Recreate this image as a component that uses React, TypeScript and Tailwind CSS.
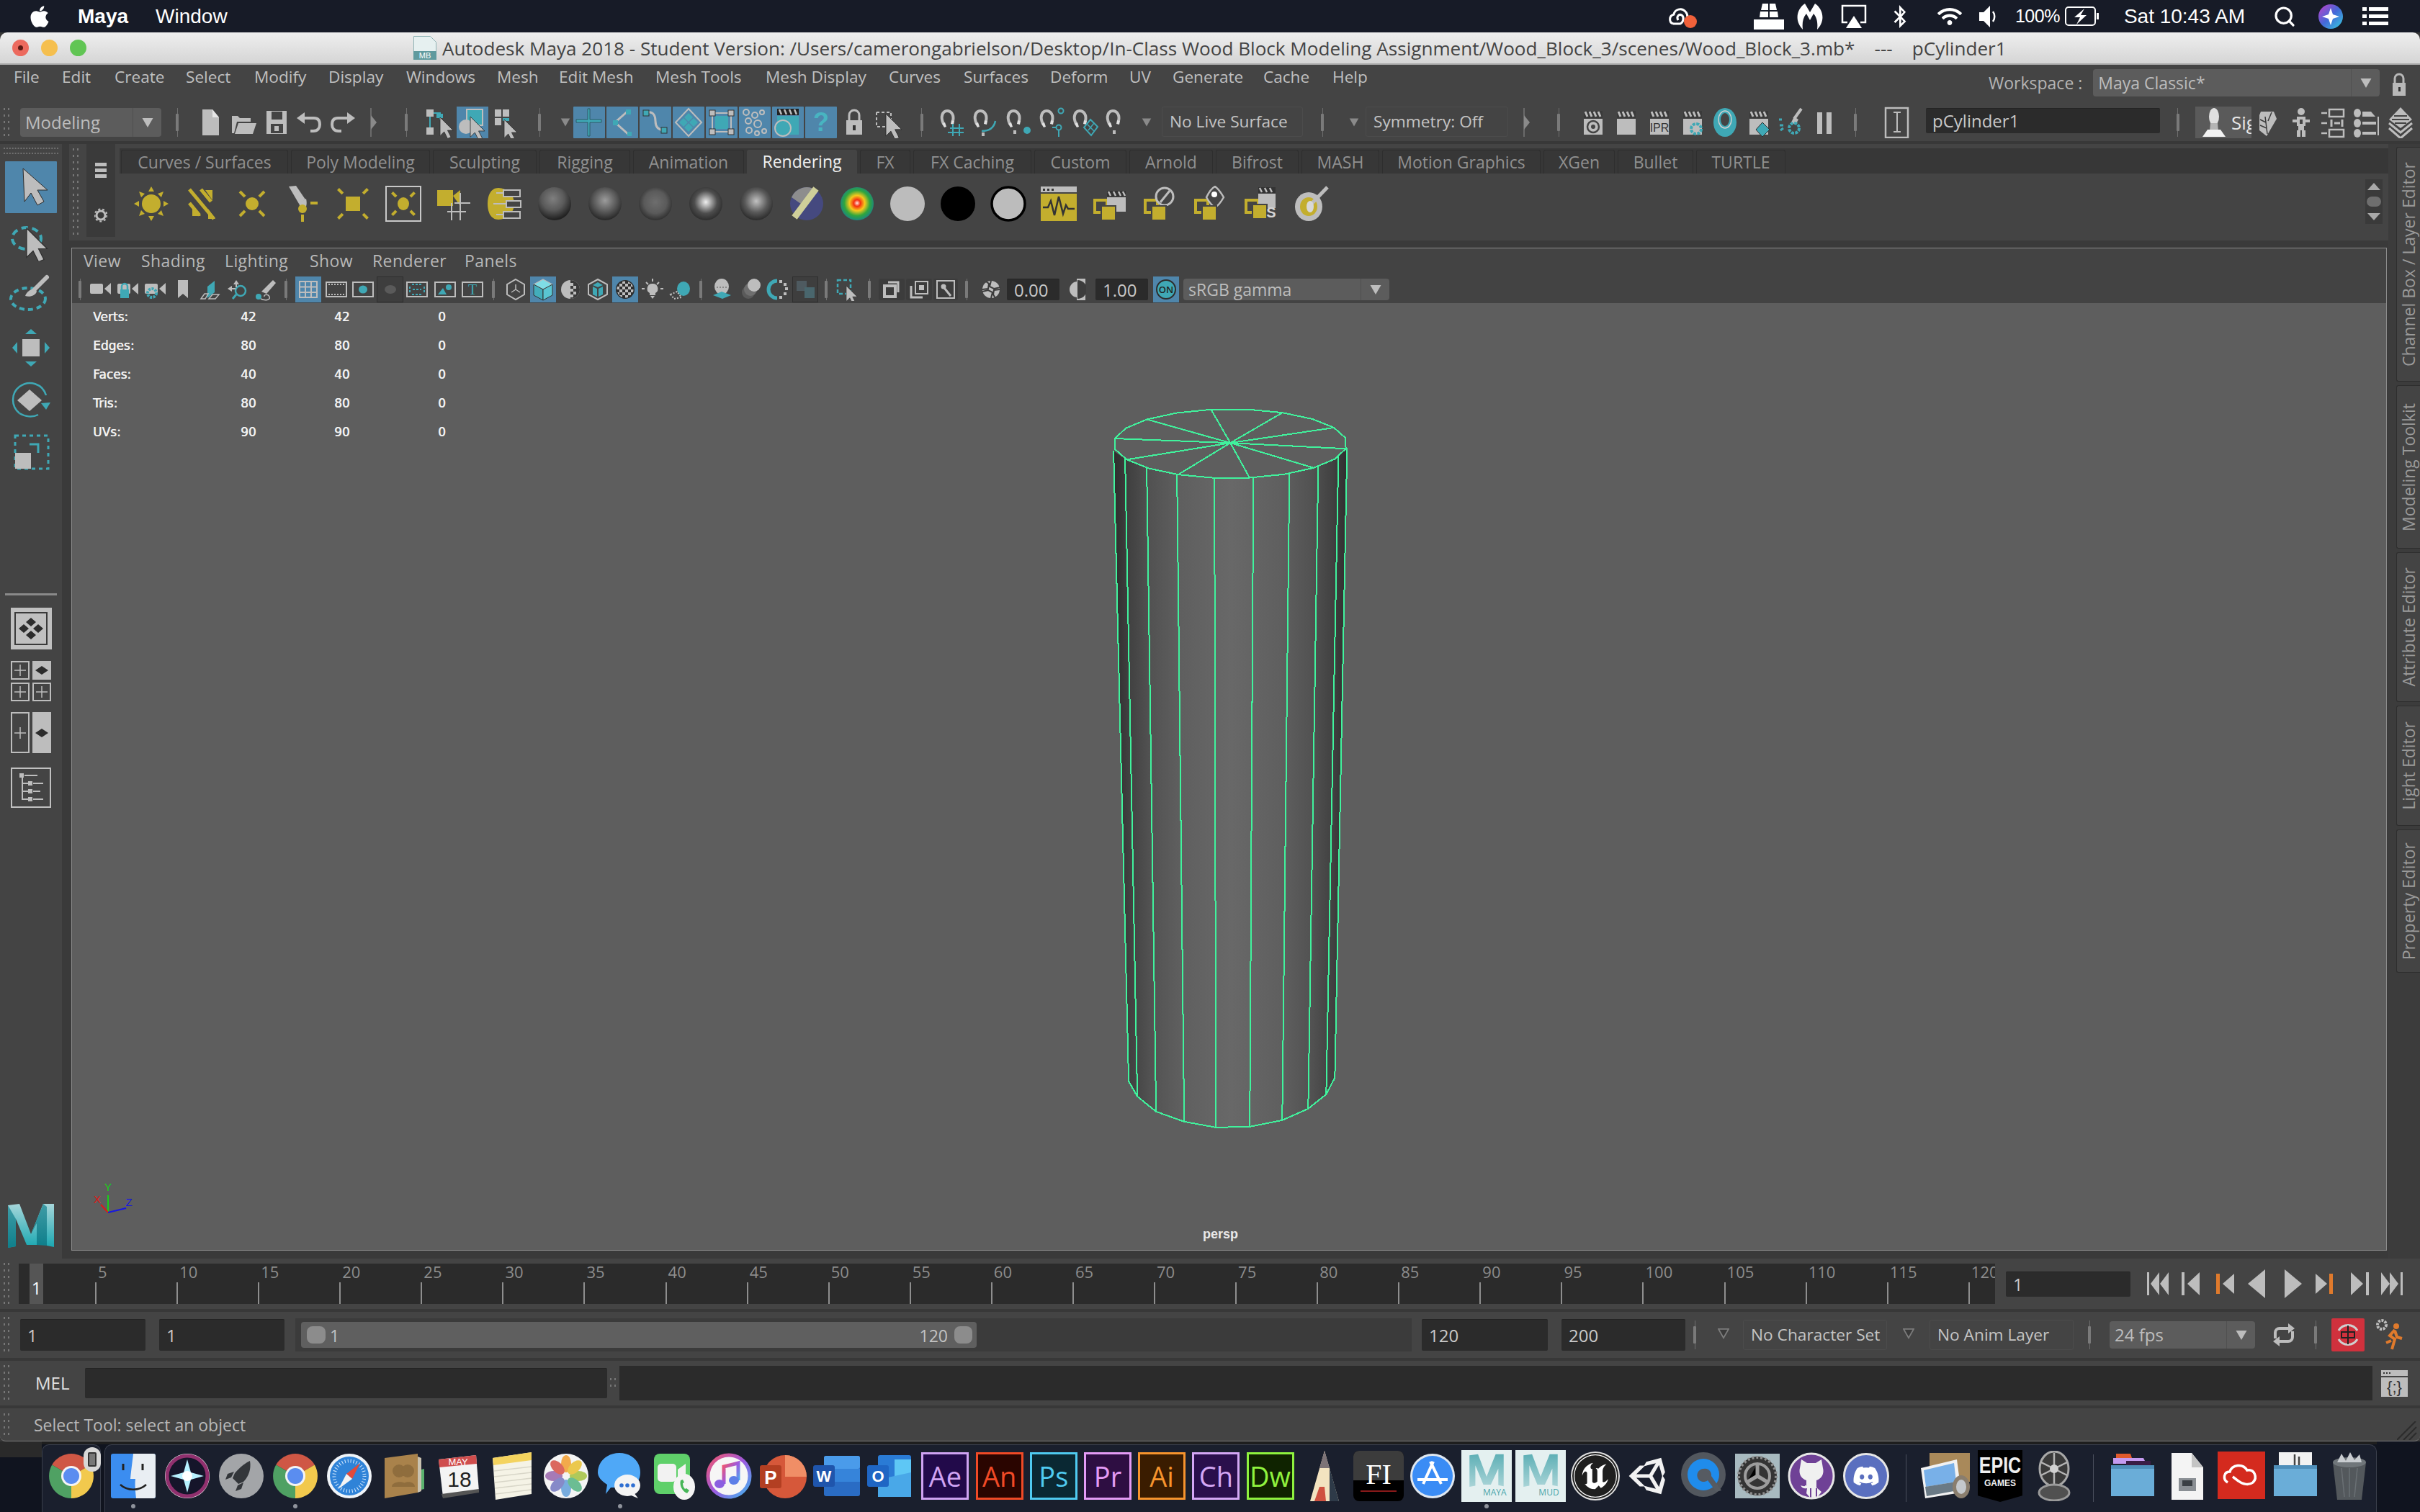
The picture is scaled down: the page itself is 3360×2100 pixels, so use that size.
import type { ReactNode } from "react";
import { FaApple, FaBluetoothB, FaWifi, FaDiscord, FaUnity } from "react-icons/fa";
import { SiUnrealengine } from "react-icons/si";
import { Search } from "lucide-react";

const G = "#bdbdbd";
const T = "#3fa8b5";
const Y = "#c3ae2e";
const D = "#333333";

type Kids = { children?: ReactNode; className?: string };

// svg wrapper, all toolbar icons are drawn on their own small grid
const Ic = ({ s = 44, children }: { s?: number; children?: ReactNode }) => (
  <svg width={s} height={s} viewBox={`0 0 ${s} ${s}`} className="shrink-0">
    {children}
  </svg>
);

const Slot = ({ className = "", children }: Kids) => (
  <div className={`flex h-full shrink-0 items-center justify-center ${className}`}>{children}</div>
);

const Arrow = ({ x, y, k = 1, fill = G }: { x: number; y: number; k?: number; fill?: string }) => (
  <path transform={`translate(${x} ${y}) scale(${k})`} d="M0 0v27l6-6 5 10 5-2-5-10h8z" fill={fill} stroke="#2e2e2e" strokeWidth="0.8" />
);

const Grip = ({ rows = 8, className = "" }: { rows?: number; className?: string }) => (
  <svg width="10" height={rows * 9} className={`shrink-0 ${className}`}>
    {Array.from({ length: rows }).map((_, i) => (
      <g key={i} fill="#777777">
        <rect x="1" y={i * 9 + 2} width="2" height="3" />
        <rect x="7" y={i * 9 + 2} width="2" height="3" />
      </g>
    ))}
  </svg>
);

const Sep = ({ className = "", h = "h-[40px]" }: { className?: string; h?: string }) => (
  <Slot className={className}>
    <div className={`relative flex w-[1px] items-center justify-center bg-[#6e6e6e] ${h}`}>
      <div className="h-[24px] w-[4px] shrink-0 rounded-[1px] bg-[#7a7a7a]" />
    </div>
  </Slot>
);

const Tri = ({ fill = G, w = 18, h = 16, stroke = "none" }: { fill?: string; w?: number; h?: number; stroke?: string }) => (
  <svg width={w} height={h} viewBox="0 0 18 16" className="shrink-0">
    <path d="M1 1h16l-8 14z" fill={fill} stroke={stroke} strokeWidth="2" />
  </svg>
);

const Handle = ({ className = "" }: Kids) => (
  <Slot className={className}>
    <svg width="10" height="40" viewBox="0 0 10 40">
      <path d="M1 0v40" stroke="#777" strokeWidth="1.5" />
      <path d="M1 10l8 10-8 10z" fill="#8a8a8a" />
    </svg>
  </Slot>
);

const Combo = ({ children, className = "", text = "text-[24px]" }: Kids & { text?: string }) => (
  <div className={`flex shrink-0 items-center rounded-[4px] bg-[#5c5c5c] pl-[7px] text-[#bdbdbd] ${text} ${className}`}>
    <span className="flex-1 whitespace-nowrap">{children}</span>
    <div className="flex h-full w-[40px] items-center justify-center border-l border-[#505050]">
      <Tri w={18} h={15} />
    </div>
  </div>
);

const LineBox = ({ children, className = "" }: Kids) => (
  <div className={`flex h-[42px] shrink-0 items-center rounded-[3px] border border-[#4c4c4c] pl-[10px] text-[22.7px] text-[#c4c4c4] ${className}`}>
    <span className="whitespace-nowrap">{children}</span>
  </div>
);

const Field = ({ children, className = "" }: Kids) => (
  <div className={`flex shrink-0 items-center rounded-[2px] border-t border-[#232323] bg-[#2b2b2b] pl-[10px] text-[24px] text-[#c8c8c8] ${className}`}>
    {children}
  </div>
);

/* ---------- macOS menu bar ---------- */

const MenuBar = () => (
  <div className="flex h-[45px] shrink-0 items-center bg-[#171b27] font-['Liberation_Sans',sans-serif] text-[28px] text-white">
    <FaApple size={34} className="ml-[38px] shrink-0" />
    <span className="ml-[36px] font-bold">Maya</span>
    <span className="ml-[38px]">Window</span>
    <div className="ml-auto flex items-center">
      <svg width="46" height="36" viewBox="0 0 46 36" className="mr-[74px]">
        <path d="M8 28c-6-2-6-11 1-13 1-7 11-10 16-4 2 2 3 6 3 8" fill="none" stroke="#fff" strokeWidth="3" />
        <path d="M8 28h10c4-2 6-9 2-12-4-2-8 2-5 7" fill="none" stroke="#fff" strokeWidth="3" />
        <circle cx="32" cy="25" r="9" fill="#f1613a" />
      </svg>
      <svg width="42" height="38" viewBox="0 0 42 38" className="mr-[17px]" fill="#fff">
        <path d="M12 2h8v9H10zM22 2h8l2 9H22zM9 13h11v8H8zM22 13h11l1 8H22zM0 24h42v14H0z" transform="translate(0 -1)" />
      </svg>
      <svg width="38" height="38" viewBox="0 0 38 38" className="mr-[24px]" fill="#fff">
        <path d="M4 30C-2 18 4 6 12 1l7 12 7-12c8 5 14 17 8 29-1 2-3 5-5 7 1-9 0-16-5-22l-5 9-5-9c-5 6-6 13-5 22-2-2-4-5-5-7z" />
      </svg>
      <svg width="36" height="34" viewBox="0 0 36 34" className="mr-[30px]">
        <path d="M9 25H2V2h32v23h-7" fill="none" stroke="#fff" strokeWidth="2.5" />
        <path d="M18 16l11 17H7z" fill="#fff" />
      </svg>
      <FaBluetoothB size={32} className="mr-[36px] shrink-0" />
      <FaWifi size={34} className="mr-[24px] shrink-0" />
      <svg width="26" height="32" viewBox="0 0 26 32" className="mr-[24px]" fill="#fff">
        <path d="M0 10h6l9-9v30l-9-9H0z" />
        <path d="M19 9c3 4 3 10 0 14" stroke="#fff" strokeWidth="2.5" fill="none" />
      </svg>
      <span className="mr-[7px] text-[25px] tracking-[-0.5px]">100%</span>
      <svg width="48" height="28" viewBox="0 0 48 28" className="mr-[34px]">
        <rect x="1" y="1" width="41" height="25" rx="4" fill="none" stroke="#fff" strokeWidth="2" />
        <rect x="44" y="9" width="3" height="9" fill="#fff" />
        <path d="M27 3L13 15h8l-5 10 14-13h-8z" fill="#fff" />
      </svg>
      <span className="mr-[39px] whitespace-nowrap">Sat 10:43 AM</span>
      <Search size={32} strokeWidth={2.4} className="mr-[31px] shrink-0" />
      <svg width="34" height="34" viewBox="0 0 34 34" className="mr-[27px]">
        <defs>
          <linearGradient id="siriBar" x1="0" y1="0" x2="1" y2="1">
            <stop offset="0" stopColor="#c43ec9" />
            <stop offset="0.5" stopColor="#4469d8" />
            <stop offset="1" stopColor="#37d0e0" />
          </linearGradient>
        </defs>
        <circle cx="17" cy="17" r="17" fill="url(#siriBar)" />
        <path d="M17 5l3 9 9 3-9 3-3 9-3-9-9-3 9-3z" fill="#fff" />
      </svg>
      <svg width="36" height="26" viewBox="0 0 36 26" className="mr-[44px]" fill="#fff">
        <rect y="0" width="6" height="5" /><rect x="9" y="0" width="27" height="5" />
        <rect y="10" width="6" height="5" /><rect x="9" y="10" width="27" height="5" />
        <rect y="20" width="6" height="5" /><rect x="9" y="20" width="27" height="5" />
      </svg>
    </div>
  </div>
);

/* ---------- window chrome ---------- */

const TitleBar = () => (
  <div className="flex h-[45px] shrink-0 items-center rounded-t-[10px] border-b-2 border-[#a9a9a9] bg-gradient-to-b from-[#efefef] to-[#d5d5d5]">
    <div className="relative ml-[17px] h-[23px] w-[23px] shrink-0 rounded-full bg-[#ec6a5e]">
      <div className="absolute left-[8px] top-[8px] h-[7px] w-[7px] rounded-full bg-[#5c1a14]" />
    </div>
    <div className="ml-[17px] h-[23px] w-[23px] shrink-0 rounded-full bg-[#f5bf4f]" />
    <div className="ml-[17px] h-[23px] w-[23px] shrink-0 rounded-full bg-[#61c554]" />
    <svg width="32" height="33" viewBox="0 0 32 33" className="ml-[454px] shrink-0">
      <path d="M0.5 0.5h23l8 8v13H0.5z" fill="#e6f0f0" stroke="#8fb3b5" />
      <rect y="21" width="32" height="12" fill="#5f9a9e" />
      <text x="16" y="31" fontSize="11" fill="#fff" textAnchor="middle" fontFamily="Liberation Sans">MB</text>
    </svg>
    <span className="ml-[8px] mt-[3px] whitespace-pre text-[26.1px] text-[#444444]">
      Autodesk Maya 2018 - Student Version: /Users/camerongabrielson/Desktop/In-Class Wood Block Modeling Assignment/Wood_Block_3/scenes/Wood_Block_3.mb*    ---    pCylinder1
    </span>
  </div>
);

const MENUS = [
  ["File", "w-[67px]"],
  ["Edit", "w-[73px]"],
  ["Create", "w-[99px]"],
  ["Select", "w-[95px]"],
  ["Modify", "w-[103px]"],
  ["Display", "w-[108px]"],
  ["Windows", "w-[126px]"],
  ["Mesh", "w-[86px]"],
  ["Edit Mesh", "w-[134px]"],
  ["Mesh Tools", "w-[153px]"],
  ["Mesh Display", "w-[171px]"],
  ["Curves", "w-[104px]"],
  ["Surfaces", "w-[120px]"],
  ["Deform", "w-[110px]"],
  ["UV", "w-[60px]"],
  ["Generate", "w-[126px]"],
  ["Cache", "w-[96px]"],
  ["Help", "w-[60px]"],
];

const MainMenu = () => (
  <div className="flex h-[58px] shrink-0 bg-[#444444] pl-[19px] text-[22.6px] text-[#c0c0c0]">
    {MENUS.map(([m, w]) => (
      <span key={m} className={`h-[34px] shrink-0 whitespace-nowrap ${w}`}>
        {m}
      </span>
    ))}
    <span className="ml-[851px] mt-[8px] h-[34px] shrink-0 whitespace-nowrap text-[23px] text-[#b4b4b4]">Workspace :</span>
    <Combo className="ml-[15px] mt-[6px] h-[38px] w-[398px]" text="text-[23px]">Maya Classic*</Combo>
    <svg width="24" height="34" viewBox="0 0 24 34" className="ml-[15px] mt-[11px] shrink-0">
      <path d="M6 14V8a6 6 0 0 1 12 0v6" fill="none" stroke="#b8b8b8" strokeWidth="3" />
      <rect x="3" y="14" width="18" height="18" fill="#b8b8b8" />
      <rect x="11" y="20" width="3" height="6" fill="#333" />
    </svg>
  </div>
);

const BlueBtn = ({ children }: Kids) => (
  <div className="mr-[2px] flex h-[44px] w-[44px] shrink-0 items-center justify-center rounded-[1px] bg-[#4f86ab]">{children}</div>
);

const Clapper = ({ children }: Kids) => (
  <Ic>
    <rect x="10" y="6" width="26" height="10" fill="#3a3a3a" />
    <path d="M12 7l3 7M18 7l3 7M24 7l3 7M30 7l3 7" stroke={G} strokeWidth="3" />
    <rect x="10" y="17" width="26" height="22" fill={G} />
    {children}
  </Ic>
);

const Magnet = ({ children }: Kids) => (
  <Ic>
    <path d="M8 24C3 14 7 6 13 6s10 6 8 14" fill="none" stroke={G} strokeWidth="4" />
    <path d="M6 24l4-2 2 6-3 1zM19 19l4 1-1 5-4-1z" fill="#e0e0e0" />
    {children}
  </Ic>
);

const ToolRow = () => (
  <div className="flex h-[48px] shrink-0 items-start bg-[#444444] text-[24px] text-[#c4c4c4]">
    <div className="flex h-[44px] shrink-0 items-start">
      <Grip rows={5} className="ml-[4px] mr-[14px]" />
      <Combo className="mt-[2px] h-[40px] w-[196px]">Modeling</Combo>
      <Sep className="w-[44px]" />
      <Slot className="w-[48px]">
        <Ic><path d="M11 4h14l9 11v25H11z" fill={G} /><path d="M25 4l9 11h-9z" fill="#e6e6e6" /></Ic>
      </Slot>
      <Slot className="w-[45px]">
        <Ic><path d="M5 13h8l3 3h15v5H12L8 37H5z" fill={G} /><path d="M14 23h25l-5 15H9z" fill={G} /></Ic>
      </Slot>
      <Slot className="w-[46px]">
        <Ic>
          <path d="M8 6h28v32H8z" fill={G} />
          <rect x="15" y="7" width="15" height="11" fill="#444" />
          <rect x="14" y="24" width="17" height="13" fill="#444" />
          <rect x="19" y="27" width="6" height="7" fill={G} />
        </Ic>
      </Slot>
      <Slot className="w-[45px]">
        <Ic>
          <path d="M14 16h14c6 0 8 4 8 9s-3 9-9 9h-4" fill="none" stroke={G} strokeWidth="4" />
          <path d="M4 16l11-8v16z" fill={G} />
        </Ic>
      </Slot>
      <Slot className="w-[45px]">
        <Ic>
          <path d="M30 16H16c-6 0-8 4-8 9s3 9 9 9h4" fill="none" stroke={G} strokeWidth="4" />
          <path d="M40 16L29 8v16z" fill={G} />
        </Ic>
      </Slot>
      <Handle className="w-[44px]" />
      <Sep className="w-[46px]" />
      <Slot className="w-[47px]">
        <Ic>
          <rect x="3" y="4" width="10" height="10" fill={G} /><rect x="3" y="29" width="10" height="10" fill={G} />
          <path d="M13 9h9v9M8 14v15" stroke={T} strokeWidth="2" fill="none" />
          <rect x="17" y="10" width="9" height="6" fill={T} />
          <Arrow x={22} y={15} k={0.95} />
        </Ic>
      </Slot>
      <div className="flex h-[44px] w-[44px] shrink-0 items-center justify-center bg-[#4f86ab]">
        <Ic>
          <rect x="14" y="4" width="22" height="22" fill={T} stroke={G} strokeWidth="2" />
          <circle cx="13" cy="28" r="10" fill={G} />
          <Arrow x={19} y={14} k={1.05} />
        </Ic>
      </div>
      <Slot className="w-[46px]">
        <Ic>
          <path d="M8 4h9v10H8zM19 4h9v10h-9zM8 16h9v10H8z" fill={G} />
          <path d="M19 16h9v4H19z" fill={T} />
          <Arrow x={21} y={18} k={0.95} />
        </Ic>
      </Slot>
      <Sep className="w-[50px]" />
      <Slot className="w-[22px]"><Tri fill="#8a8a8a" w={14} h={14} /></Slot>
      <BlueBtn>
        <Ic><path d="M20 3h3v15h16v4H23v19h-3V22H4v-4h16z" fill={T} stroke="#264c57" strokeWidth="0.8" /></Ic>
      </BlueBtn>
      <BlueBtn>
        <Ic>
          <path d="M30 6L12 22l20 18" fill="none" stroke={G} strokeWidth="3" />
          <rect x="27" y="4" width="7" height="7" fill={T} /><rect x="9" y="19" width="7" height="7" fill={T} /><rect x="29" y="35" width="6" height="6" fill={T} />
        </Ic>
      </BlueBtn>
      <BlueBtn>
        <Ic>
          <path d="M10 8c10-2 12 6 12 12s2 12 11 13" fill="none" stroke={G} strokeWidth="3" />
          <rect x="5" y="5" width="8" height="8" fill={T} stroke={D} /><rect x="30" y="29" width="8" height="8" fill={T} stroke={D} />
        </Ic>
      </BlueBtn>
      <BlueBtn>
        <Ic>
          <path d="M22 3l18 19-18 19L4 22z" fill="none" stroke={G} strokeWidth="2" />
          <path d="M22 9l6 6-6 6-6-6zM22 23l6 6-6 6-6-6zM9 22l6-6 6 6-6 6zM35 22l-6-6-6 6 6 6z" fill={T} />
        </Ic>
      </BlueBtn>
      <BlueBtn>
        <Ic>
          <path d="M9 9h26v26H9z" fill="none" stroke={G} strokeWidth="2" />
          <path d="M13 13h18v18H13z" fill={T} />
          <g fill={G} stroke="#333"><rect x="5" y="5" width="8" height="8" /><rect x="31" y="5" width="8" height="8" /><rect x="5" y="31" width="8" height="8" /><rect x="31" y="31" width="8" height="8" /></g>
        </Ic>
      </BlueBtn>
      <BlueBtn>
        <Ic>
          <g fill="none" stroke={G} strokeWidth="2">
            <circle cx="10" cy="8" r="4" /><circle cx="22" cy="12" r="4" /><circle cx="32" cy="8" r="3" /><circle cx="13" cy="20" r="4" /><circle cx="26" cy="24" r="5" /><circle cx="35" cy="34" r="3" /><circle cx="14" cy="33" r="4" /><circle cx="25" cy="37" r="3" />
          </g>
        </Ic>
      </BlueBtn>
      <BlueBtn>
        <Ic>
          <rect x="7" y="3" width="30" height="9" fill="#222" />
          <path d="M10 4l3 7M17 4l3 7M24 4l3 7M31 4l3 7" stroke={G} strokeWidth="2.5" />
          <rect x="7" y="13" width="30" height="26" fill={T} />
          <ellipse cx="15" cy="30" rx="11" ry="11" fill={T} stroke={G} strokeWidth="2" />
        </Ic>
      </BlueBtn>
      <BlueBtn>
        <span className="font-['Liberation_Sans',sans-serif] text-[36px] font-bold leading-none text-[#48b4c1]">?</span>
      </BlueBtn>
      <Slot className="w-[44px]">
        <Ic>
          <path d="M15 20v-8a7 7 0 0 1 14 0v8" fill="none" stroke={G} strokeWidth="3" />
          <rect x="11" y="19" width="22" height="20" fill={G} />
          <rect x="20" y="26" width="4" height="7" fill="#333" />
        </Ic>
      </Slot>
      <Slot className="w-[50px]">
        <Ic>
          <path d="M6 8h20v18M6 8v20h12" fill="none" stroke={G} strokeWidth="2" strokeDasharray="4 3" />
          <Arrow x={19} y={10} k={1.15} />
        </Ic>
      </Slot>
      <Sep className="w-[43px]" />
      <Slot className="w-[46px]">
        <Magnet><path d="M17 30h19M21 24v17M30 24v17M14 36h22" stroke={T} strokeWidth="2" /></Magnet>
      </Slot>
      <Slot className="w-[46px]">
        <Magnet><path d="M15 34c10 0 17-4 19-14" fill="none" stroke={T} strokeWidth="2.5" /><rect x="15" y="36" width="4" height="5" fill={G} /></Magnet>
      </Slot>
      <Slot className="w-[46px]">
        <Magnet><circle cx="32" cy="33" r="5" fill={T} /><rect x="13" y="33" width="4" height="5" fill={G} /></Magnet>
      </Slot>
      <Slot className="w-[46px]">
        <Magnet>
          <circle cx="33" cy="6" r="3.5" fill="none" stroke={T} strokeWidth="2" />
          <circle cx="30" cy="29" r="3.5" fill="none" stroke={T} strokeWidth="2" />
          <path d="M30 33v9M21 29h5" stroke={T} strokeWidth="2" />
        </Magnet>
      </Slot>
      <Slot className="w-[46px]">
        <Magnet><path d="M28 18l10 10-9 12-10-11z" fill="none" stroke={T} strokeWidth="2" /><path d="M24 25l9 9M33 23l-8 10" stroke={T} strokeWidth="1.5" /></Magnet>
      </Slot>
      <Slot className="w-[46px]">
        <Magnet><rect x="13" y="33" width="4" height="5" fill={G} /></Magnet>
      </Slot>
      <Slot className="w-[30px]"><Tri fill="#8a8a8a" w={14} h={14} /></Slot>
      <LineBox className="ml-[6px] w-[196px]">No Live Surface</LineBox>
      <Sep className="w-[54px]" />
      <Slot className="w-[33px]"><Tri fill="#8a8a8a" w={14} h={14} /></Slot>
      <LineBox className="w-[198px]">Symmetry: Off</LineBox>
      <Handle className="w-[52px]" />
      <Sep className="w-[36px]" />
      <Slot className="ml-[6px] w-[46px]">
        <Clapper><circle cx="23" cy="28" r="8" fill="none" stroke="#444" strokeWidth="2.5" /><circle cx="23" cy="28" r="3" fill="#444" /></Clapper>
      </Slot>
      <Slot className="w-[46px]"><Clapper /></Slot>
      <Slot className="w-[46px]">
        <Clapper><text x="23" y="35" fontSize="16" textAnchor="middle" fill="#333" fontFamily="Liberation Sans">IPR</text></Clapper>
      </Slot>
      <Slot className="w-[46px]">
        <Clapper><circle cx="28" cy="31" r="7" fill="none" stroke={T} strokeWidth="4" strokeDasharray="4 1.5" /></Clapper>
      </Slot>
      <Slot className="w-[46px]">
        <Ic><ellipse cx="22" cy="22" rx="16" ry="20" fill={T} /><ellipse cx="22" cy="18" rx="6" ry="9" fill="#444" /><ellipse cx="22" cy="18" rx="9" ry="12" fill="none" stroke="#cfcfcf" strokeWidth="1.5" /></Ic>
      </Slot>
      <Slot className="w-[46px]">
        <Clapper><path d="M28 22l10 10-10 10-9-10z" fill={T} stroke="#2e2e2e" /></Clapper>
      </Slot>
      <Slot className="w-[46px]">
        <Ic>
          <path d="M36 3l-10 14" stroke={G} strokeWidth="4" /><path d="M26 14l-4 8 6 3 4-7z" fill={G} />
          <circle cx="26" cy="30" r="7" fill="none" stroke={T} strokeWidth="4" strokeDasharray="4 1.5" />
          <path d="M6 26h5M7 33l4-3M5 18h4" stroke={T} strokeWidth="3" />
        </Ic>
      </Slot>
      <Slot className="w-[46px]">
        <Ic><rect x="12" y="8" width="7" height="30" fill={G} /><rect x="25" y="8" width="7" height="30" fill={G} /></Ic>
      </Slot>
      <Sep className="w-[40px]" />
      <Slot className="w-[76px]">
        <Ic>
          <rect x="6" y="2" width="31" height="41" fill="none" stroke={G} strokeWidth="2.5" />
          <path d="M17 8h10M22 8v27M17 35h10" stroke={G} strokeWidth="2" fill="none" />
        </Ic>
      </Slot>
      <Field className="ml-[2px] mt-[2px] h-[35px] w-[325px] !pl-[9px]">pCylinder1</Field>
      <Sep className="w-[49px]" />
      <div className="flex h-[44px] w-[78px] shrink-0 items-center overflow-hidden bg-[#5a5a5a] pl-[8px] text-[#e6e6e6]">
        <svg width="36" height="42" viewBox="0 0 36 42" className="shrink-0">
          <ellipse cx="18" cy="13" rx="7" ry="12" fill="#dfdfdf" />
          <path d="M13 22h10l1 11h-12z" fill="#b4b4b4" />
          <path d="M2 41l7-10h18l7 10z" fill="#f2f2f2" />
        </svg>
        <span className="ml-[6px] text-[26px]">Sign</span>
      </div>
      <Slot className="w-[46px]">
        <Ic>
          <path d="M12 7h18l4 10-14 24-10-8V12z" fill={G} />
          <path d="M18 14l3 24M11 18l8 4M11 26l9 4M27 8l-5 12" stroke="#3a3a3a" strokeWidth="1.5" />
        </Ic>
      </Slot>
      <Slot className="w-[46px]">
        <Ic>
          <circle cx="22" cy="7" r="5" fill={G} />
          <path d="M16 14h12v4h6v4h-6v5h-2v6h2v9h-5V33h-2v9h-5v-9h2v-6h-2v-5h-6v-4h6z" fill={G} />
          <rect x="20" y="18" width="4" height="6" fill="#444" />
        </Ic>
      </Slot>
      <Slot className="w-[46px]">
        <Ic>
          <g fill="none" stroke={G} strokeWidth="2.5">
            <rect x="15" y="4" width="20" height="10" /><rect x="15" y="32" width="20" height="10" />
            <path d="M4 9h8M4 23h8M4 37h8" />
          </g>
          <path d="M18 18v10M33 18v10M22 23h8" stroke={G} strokeWidth="3" />
        </Ic>
      </Slot>
      <Slot className="w-[46px]">
        <Ic>
          <g fill={G}>
            <ellipse cx="8" cy="9" rx="5" ry="6" /><ellipse cx="8" cy="23" rx="5" ry="6" /><ellipse cx="8" cy="37" rx="5" ry="6" />
            <path d="M15 7h12l6 7H15zM15 21h19v4H15zM15 35h19v4H15z" />
          </g>
          <path d="M37 14v26" stroke={G} strokeWidth="2" />
        </Ic>
      </Slot>
      <Slot className="w-[46px]">
        <Ic>
          <path d="M22 1l16 17-16 12L6 18z" fill={G} />
          <path d="M6 23l16 13 16-13M6 30l16 14 16-14" fill="none" stroke={G} strokeWidth="3" />
          <path d="M13 13h18M10 18h24M14 23h16" stroke="#444" strokeWidth="2" />
        </Ic>
      </Slot>
    </div>
  </div>
);

/* ---------- tool box on the left ---------- */

const Pane = ({ children }: Kids) => (
  <div className="flex shrink-0 items-center justify-center border-2 border-[#c0c0c0]">{children}</div>
);

const PlusCell = ({ wide = false }: { wide?: boolean }) => (
  <div className={`flex items-center justify-center border-2 border-[#bdbdbd] ${wide ? "h-[57px] w-[26px]" : "h-[26px] w-[26px]"}`}>
    <svg width="16" height="16"><path d="M8 0v16M0 8h16" stroke={G} strokeWidth="1.5" /></svg>
  </div>
);

const DiamondCell = ({ wide = false }: { wide?: boolean }) => (
  <div className={`flex items-center justify-center bg-[#bdbdbd] ${wide ? "h-[57px] w-[26px]" : "h-[26px] w-[26px]"}`}>
    <svg width="18" height="12"><path d="M9 0l9 6-9 6-9-6z" fill="#2c2c2c" /></svg>
  </div>
);

const ToolBox = () => (
  <div className="flex w-[86px] shrink-0 flex-col items-center bg-[#444444]">
    <svg width="76" height="14" className="mt-[4px] shrink-0">
      {Array.from({ length: 20 }).map((_, i) => (
        <g key={i} fill="#707070">
          <rect x={i * 3.9} y="1" width="2" height="2" />
          <rect x={i * 3.9} y="8" width="2" height="2" />
        </g>
      ))}
    </svg>
    <div className="mt-[6px] flex h-[72px] w-[72px] shrink-0 items-center justify-center rounded-[1px] bg-[#4f86ab]">
      <svg width="48" height="60" viewBox="0 0 48 60">
        <path d="M13 4l2 46 9-12 9 17 9-5-9-16h14z" fill={G} stroke="#2c2c2c" />
      </svg>
    </div>
    <div className="mt-[4px] flex h-[73px] shrink-0 items-center pb-[8px]">
      <Ic s={60}>
        <ellipse cx="24" cy="28" rx="20" ry="15" fill="none" stroke={T} strokeWidth="4" strokeDasharray="9 6" />
        <Arrow x={24} y={14} k={1.5} />
      </Ic>
    </div>
    <div className="flex h-[73px] shrink-0 items-center pb-[2px]">
      <Ic s={60}>
        <ellipse cx="26" cy="36" rx="24" ry="15" fill="none" stroke={T} strokeWidth="4" strokeDasharray="7 5" />
        <path d="M52 6L34 24" stroke={G} strokeWidth="6" strokeLinecap="round" />
        <path d="M36 22c-6 0-12 4-14 10 6 2 14 0 16-6z" fill={G} />
      </Ic>
    </div>
    <div className="flex h-[73px] shrink-0 items-center">
      <Ic s={60}>
        <rect x="18" y="18" width="24" height="24" fill={G} />
        <path d="M30 4l8 7H22zM30 56l-8-7h16zM4 30l7-8v16zM56 30l-7-8v16z" fill={T} />
      </Ic>
    </div>
    <div className="flex h-[73px] shrink-0 items-center">
      <Ic s={60}>
        <path d="M14 48C2 38 2 20 14 11c14-10 32-4 37 12" fill="none" stroke={T} strokeWidth="2.5" />
        <path d="M14 48c8 5 18 6 26 2" fill="none" stroke={T} strokeWidth="2.5" />
        <path d="M28 15l17 15-17 15-17-15z" fill={G} />
        <path d="M44 34l13-1-6 10z" fill={T} />
      </Ic>
    </div>
    <div className="flex h-[73px] shrink-0 items-center">
      <Ic s={60}>
        <rect x="8" y="6" width="46" height="46" fill="none" stroke={T} strokeWidth="3" strokeDasharray="5 5" />
        <rect x="8" y="30" width="22" height="22" fill={G} />
        <path d="M28 18h12v12" fill="none" stroke={T} strokeWidth="3" />
      </Ic>
    </div>
    <div className="mt-[159px] h-[3px] w-[72px] shrink-0 bg-[#8a8a8a]" />
    <div className="mt-[17px] flex h-[58px] w-[57px] shrink-0 items-center justify-center bg-[#c0c0c0]">
      <div className="flex h-[46px] w-[46px] items-center justify-center border-2 border-[#3a3a3a]">
        <svg width="38" height="32" viewBox="0 0 38 32" fill="#2c2c2c">
          <path d="M19 1l7 6-7 6-7-6zM9 10l7 6-7 6-7-6zM29 10l7 6-7 6-7-6zM19 19l7 6-7 6-7-6z" />
        </svg>
      </div>
    </div>
    <div className="mt-[16px] grid shrink-0 grid-cols-2 gap-[4px]">
      <PlusCell />
      <DiamondCell />
      <PlusCell />
      <PlusCell />
    </div>
    <div className="mt-[15px] flex shrink-0 gap-[4px]">
      <PlusCell wide />
      <DiamondCell wide />
    </div>
    <div className="mt-[20px] shrink-0">
      <Pane>
        <svg width="52" height="52" viewBox="0 0 52 52">
          <g fill={G}>
            <rect x="10" y="6" width="6" height="6" /><rect x="17" y="8" width="18" height="2" />
            <rect x="22" y="17" width="6" height="6" /><rect x="29" y="19" width="14" height="2" />
            <rect x="22" y="28" width="6" height="6" /><rect x="29" y="30" width="10" height="2" />
            <rect x="22" y="39" width="6" height="6" /><rect x="29" y="41" width="14" height="2" />
            <rect x="13" y="12" width="2" height="30" /><rect x="13" y="19" width="9" height="2" /><rect x="13" y="30" width="9" height="2" /><rect x="13" y="41" width="9" height="2" />
          </g>
        </svg>
      </Pane>
    </div>
    <svg width="64" height="62" viewBox="0 0 64 62" className="mb-[15px] mt-auto shrink-0">
      <defs>
        <linearGradient id="mLogo" x1="0" y1="0" x2="0" y2="1">
          <stop offset="0" stopColor="#a6d6da" />
          <stop offset="1" stopColor="#19a7b1" />
        </linearGradient>
        <linearGradient id="mLogoDark" x1="0" y1="0" x2="0" y2="1">
          <stop offset="0" stopColor="#3f9ca6" />
          <stop offset="1" stopColor="#0f7f8b" />
        </linearGradient>
      </defs>
      <path d="M0 3l16-2 16 42 17-42h15v60l-10-2V28L40 58H26L11 22v38l-11 2z" fill="url(#mLogo)" />
      <path d="M32 43L49 1l5 4v54l-14-1V28z" fill="url(#mLogoDark)" />
      <path d="M0 62V3l11 19v38z" fill="url(#mLogoDark)" />
    </svg>
  </div>
);

/* ---------- shelf ---------- */

const TABS = [
  ["Curves / Surfaces", "w-[232px]"],
  ["Poly Modeling", "w-[193px]"],
  ["Sculpting", "w-[144px]"],
  ["Rigging", "w-[126px]"],
  ["Animation", "w-[154px]"],
  ["Rendering", "w-[153px]"],
  ["FX", "w-[70px]"],
  ["FX Caching", "w-[164px]"],
  ["Custom", "w-[128px]"],
  ["Arnold", "w-[116px]"],
  ["Bifrost", "w-[115px]"],
  ["MASH", "w-[108px]"],
  ["Motion Graphics", "w-[220px]"],
  ["XGen", "w-[99px]"],
  ["Bullet", "w-[105px]"],
  ["TURTLE", "w-[124px]"],
];

const Sph = ({ id, cx, cy, hi, mid = "#5a5a5a" }: { id: string; cx: string; cy: string; hi: string; mid?: string }) => (
  <Ic s={50}>
    <defs>
      <radialGradient id={id} cx={cx} cy={cy} r="0.62">
        <stop offset="0" stopColor={hi} />
        <stop offset="0.55" stopColor={mid} />
        <stop offset="1" stopColor="#222222" />
      </radialGradient>
    </defs>
    <circle cx="25" cy="25" r="23" fill={`url(#${id})`} />
  </Ic>
);

const ShelfSlot = ({ children }: Kids) => (
  <div className="flex h-[60px] w-[70px] shrink-0 items-center justify-center">{children}</div>
);

const Rays = ({ r = 14, l = 9 }: { r?: number; l?: number }) => (
  <g stroke={Y} strokeWidth="4">
    {[45, 135, 225, 315].map((a) => {
      const c = (a * Math.PI) / 180;
      return (
        <path key={a} d={`M${25 + r * Math.cos(c)} ${25 + r * Math.sin(c)}L${25 + (r + l) * Math.cos(c)} ${25 + (r + l) * Math.sin(c)}`} />
      );
    })}
  </g>
);

const YStack = ({ children }: Kids) => (
  <Ic s={50}>
    <rect x="5" y="20" width="17" height="17" fill="none" stroke={Y} strokeWidth="4" />
    <rect x="14" y="28" width="20" height="20" fill={Y} stroke="#444" strokeWidth="2" />
    {children}
  </Ic>
);

const Shelf = () => (
  <div className="flex h-[134px] shrink-0 bg-[#444444]">
    <Grip rows={14} className="ml-[4px] mr-[10px] mt-[4px]" />
    <div className="flex h-[129px] w-[40px] shrink-0 flex-col items-center justify-between bg-[#3a3a3a] pb-[20px] pt-[26px]">
      <svg width="16" height="22" fill={G}><rect y="0" width="16" height="5" /><rect y="8" width="16" height="5" /><rect y="16" width="16" height="5" /></svg>
      <svg width="18" height="20" viewBox="0 0 18 20"><circle cx="9" cy="10" r="6" fill="none" stroke={G} strokeWidth="3" /><circle cx="9" cy="10" r="8.5" fill="none" stroke={G} strokeWidth="2" strokeDasharray="3 3" /></svg>
    </div>
    <div className="ml-[6px] flex min-w-0 flex-1 flex-col">
      <div className="mt-[6px] flex h-[35px] shrink-0 items-end gap-[4px] overflow-hidden bg-[#373737] pl-[2px]">
        {TABS.map(([t, w]) => (
          <div
            key={t}
            className={`flex h-[33px] shrink-0 items-center justify-center rounded-t-[3px] text-[23px] ${w} ${
              t === "Rendering" ? "bg-[#444444] font-medium text-[#f0f0f0]" : "border border-b-0 border-[#2e2e2e] text-[#909090]"
            }`}
          >
            {t}
          </div>
        ))}
      </div>
      <div className="flex flex-1 items-start">
        <div className="ml-[9px] mt-[12px] flex h-[60px] shrink-0 items-center">
          <ShelfSlot>
            <Ic s={50}>
              <circle cx="25" cy="25" r="13" fill={Y} />
              <g fill={Y}><path d="M25 1l4 7h-8zM25 49l-4-7h8zM1 25l7-4v8zM49 25l-7 4v-8zM8 8l8 3-5 5zM42 8l-8 3 5 5zM8 42l3-8 5 5zM42 42l-3-8-5 5z" /></g>
            </Ic>
          </ShelfSlot>
          <ShelfSlot>
            <Ic s={50}>
              <g stroke={Y} strokeWidth="5" fill="none"><path d="M8 5l34 41M24 5l14 17M8 24l14 17" /></g>
              <path d="M30 6h10v14zM12 30v12h12zM34 32v14h10z" fill={Y} />
            </Ic>
          </ShelfSlot>
          <ShelfSlot>
            <Ic s={50}><circle cx="25" cy="25" r="9" fill={Y} /><Rays r={14} l={10} /></Ic>
          </ShelfSlot>
          <ShelfSlot>
            <Ic s={50}>
              <path d="M6 1l14 24 9-6L16 0z" fill={G} /><path d="M20 24l10-6c2 8 0 14-6 20z" fill={G} />
              <circle cx="25" cy="32" r="6" fill={Y} />
              <path d="M36 24h10M25 40v10" stroke={Y} strokeWidth="4" />
            </Ic>
          </ShelfSlot>
          <ShelfSlot>
            <Ic s={50}><rect x="15" y="15" width="20" height="20" fill={Y} /><Rays r={20} l={9} /></Ic>
          </ShelfSlot>
          <ShelfSlot>
            <Ic s={50}>
              <rect x="1" y="1" width="48" height="48" fill="none" stroke="#c8c8c8" strokeWidth="2" />
              <ellipse cx="25" cy="25" rx="8" ry="9" fill={Y} /><Rays r={14} l={8} />
            </Ic>
          </ShelfSlot>
          <ShelfSlot>
            <Ic s={50}>
              <rect x="2" y="6" width="22" height="22" fill={Y} /><path d="M24 14l10-8v22z" fill={Y} />
              <path d="M34 10v38M26 24h22M16 36h26M22 24v24" stroke={G} strokeWidth="2" />
            </Ic>
          </ShelfSlot>
          <ShelfSlot>
            <Ic s={50}>
              <path d="M17 3a22 22 0 0 1 0 44C6 47 2 36 2 25S6 3 17 3z" fill={Y} />
              <g fill="#444" stroke={G} strokeWidth="2"><rect x="24" y="6" width="23" height="9" /><rect x="28" y="21" width="20" height="9" /><rect x="24" y="36" width="23" height="9" /></g>
              <path d="M14 10h10M10 25h18M14 40h10" stroke={G} strokeWidth="2" />
            </Ic>
          </ShelfSlot>
          <ShelfSlot><Sph id="s1" cx="0.45" cy="0.35" hi="#7f7f7f" /></ShelfSlot>
          <ShelfSlot><Sph id="s2" cx="0.5" cy="0.4" hi="#9c9c9c" /></ShelfSlot>
          <ShelfSlot><Sph id="s3" cx="0.5" cy="0.45" hi="#6e6e6e" /></ShelfSlot>
          <ShelfSlot><Sph id="s4" cx="0.5" cy="0.45" hi="#f0f0f0" mid="#4e4e4e" /></ShelfSlot>
          <ShelfSlot><Sph id="s5" cx="0.5" cy="0.42" hi="#c2c2c2" /></ShelfSlot>
          <ShelfSlot>
            <Ic s={50}>
              <circle cx="25" cy="25" r="23" fill="#45497f" />
              <path d="M4 16A23 23 0 0 1 38 6L24 30z" fill="#8d8d8d" />
              <path d="M38 4L8 44" stroke="#cfcf9a" strokeWidth="9" />
            </Ic>
          </ShelfSlot>
          <ShelfSlot>
            <Ic s={50}>
              <defs>
                <radialGradient id="rainbow" cx="0.5" cy="0.48" r="0.55">
                  <stop offset="0" stopColor="#ffe9e0" />
                  <stop offset="0.18" stopColor="#f42f10" />
                  <stop offset="0.42" stopColor="#f6c81c" />
                  <stop offset="0.7" stopColor="#2fa63e" />
                  <stop offset="1" stopColor="#197f8e" />
                </radialGradient>
              </defs>
              <circle cx="25" cy="25" r="23" fill="url(#rainbow)" />
            </Ic>
          </ShelfSlot>
          <ShelfSlot><Ic s={50}><circle cx="25" cy="25" r="24" fill="#bcbcbc" /></Ic></ShelfSlot>
          <ShelfSlot><Ic s={50}><circle cx="25" cy="25" r="24" fill="#000000" /></Ic></ShelfSlot>
          <ShelfSlot><Ic s={50}><circle cx="25" cy="25" r="23" fill="#bcbcbc" stroke="#000" strokeWidth="3.5" /></Ic></ShelfSlot>
          <ShelfSlot>
            <Ic s={50}>
              <rect y="1" width="50" height="8" fill={G} /><path d="M3 4h3v3H3zM9 4h3v3H9zM15 4h3v3h-3z" fill="#333" />
              <rect y="11" width="50" height="38" fill={Y} />
              <path d="M3 30h7l4-9 5 20 6-26 6 24 4-12 3 5h9" fill="none" stroke="#333" strokeWidth="2.5" />
            </Ic>
          </ShelfSlot>
          <ShelfSlot>
            <YStack>
              <rect x="22" y="7" width="26" height="8" fill="#333" />
              <path d="M24 8l3 6M31 8l3 6M38 8l3 6M44 8l3 6" stroke={G} strokeWidth="2.5" />
              <rect x="22" y="16" width="26" height="20" fill={G} />
              <rect x="14" y="28" width="20" height="20" fill={Y} stroke="#444" strokeWidth="2" />
            </YStack>
          </ShelfSlot>
          <ShelfSlot>
            <YStack>
              <circle cx="32" cy="15" r="12" fill="#444" stroke={G} strokeWidth="3" />
              <path d="M26 23l13-16" stroke={G} strokeWidth="3" />
              <rect x="14" y="28" width="20" height="20" fill={Y} stroke="#444" strokeWidth="2" />
            </YStack>
          </ShelfSlot>
          <ShelfSlot>
            <YStack>
              <path d="M20 16c4-8 8-13 12-15 4 3 8 8 12 15-4 7-8 12-12 14-4-2-8-7-12-14z" fill="#444" stroke={G} strokeWidth="2.5" />
              <circle cx="31" cy="12" r="4" fill="#fff" />
              <rect x="14" y="28" width="20" height="20" fill={Y} stroke="#444" strokeWidth="2" />
            </YStack>
          </ShelfSlot>
          <ShelfSlot>
            <YStack>
              <rect x="22" y="2" width="24" height="8" fill="#333" />
              <path d="M24 3l3 6M31 3l3 6M38 3l3 6" stroke={G} strokeWidth="2.5" />
              <rect x="22" y="11" width="24" height="20" fill={G} />
              <rect x="14" y="26" width="20" height="20" fill={Y} stroke="#444" strokeWidth="2" />
              <text x="40" y="44" fontSize="20" fontWeight="700" textAnchor="middle" fill="#d5d5d5" fontFamily="Liberation Sans">S</text>
            </YStack>
          </ShelfSlot>
          <ShelfSlot>
            <Ic s={50}>
              <ellipse cx="22" cy="29" rx="19" ry="20" fill="#bdbdbd" />
              <ellipse cx="22" cy="29" rx="12" ry="13" fill={Y} />
              <path d="M48 2L25 26" stroke={G} strokeWidth="5" />
              <ellipse cx="24" cy="29" rx="5" ry="8" fill="#d8d8d8" />
            </Ic>
          </ShelfSlot>
        </div>
        <div className="ml-auto mr-[8px] mt-[8px] flex h-[62px] w-[24px] shrink-0 flex-col items-center justify-between bg-[#3a3a3a] py-[5px]">
          <svg width="18" height="10"><path d="M9 0l9 10H0z" fill="#a8a8a8" /></svg>
          <div className="h-[14px] w-[20px] rounded-full bg-[#6e6e6e]" />
          <svg width="18" height="10"><path d="M9 10l9-10H0z" fill="#a8a8a8" /></svg>
        </div>
      </div>
    </div>
  </div>
);

/* ---------- viewport panel ---------- */

const PANEL_MENU = [
  ["View", "w-[80px]"],
  ["Shading", "w-[116px]"],
  ["Lighting", "w-[118px]"],
  ["Show", "w-[87px]"],
  ["Renderer", "w-[128px]"],
  ["Panels", "w-[90px]"],
];

const Fr = ({ children, blue = false, dark = false, className = "" }: Kids & { blue?: boolean; dark?: boolean }) => (
  <div
    className={`flex h-[36px] w-[36px] shrink-0 items-center justify-center ${blue ? "bg-[#4f86ab]" : ""} ${
      dark ? "border border-[#2e2e2e] bg-[#3e3e3e]" : ""
    } ${className}`}
  >
    {children}
  </div>
);

const PS = ({ children }: Kids) => (
  <svg width="32" height="32" viewBox="0 0 32 32" className="shrink-0">
    {children}
  </svg>
);

const Cam = ({ children }: Kids) => (
  <PS>
    <rect x="1" y="8" width="18" height="14" rx="2" fill={G} />
    <path d="M21 15l9-8v16z" fill={G} />
    {children}
  </PS>
);

const Box30 = ({ children }: Kids) => (
  <PS>
    <rect x="2" y="6" width="28" height="20" fill="none" stroke={G} strokeWidth="2" />
    {children}
  </PS>
);

const PanelBar = () => (
  <div className="flex h-[38px] shrink-0 items-center bg-[#434343] pl-[1px]">
    <Sep className="w-[20px]" h="h-[30px]" />
    <Slot className="w-[38px]"><Cam /></Slot>
    <Slot className="w-[38px]">
      <Cam>
        <rect x="5" y="16" width="12" height="12" fill={T} /><path d="M7 16v-4a4 4 0 0 1 8 0v4" fill="none" stroke={T} strokeWidth="2.5" />
      </Cam>
    </Slot>
    <Slot className="w-[38px]">
      <Cam><circle cx="11" cy="21" r="6" fill="none" stroke={T} strokeWidth="4" strokeDasharray="3 1.5" /></Cam>
    </Slot>
    <Slot className="w-[38px]">
      <PS><path d="M9 3h14v25l-7-6-7 6z" fill={G} /></PS>
    </Slot>
    <Slot className="w-[38px]">
      <PS>
        <path d="M12 12l10-8v16l-10 8z" fill={T} />
        <path d="M3 29l5-7h5l-4 7zM14 29l5-6h9l-5 6z" fill="none" stroke={G} strokeWidth="1.5" />
      </PS>
    </Slot>
    <Slot className="w-[38px]">
      <PS>
        <circle cx="20" cy="18" r="7" fill="none" stroke={T} strokeWidth="2.5" /><path d="M14 23l-5 6" stroke={T} strokeWidth="3" />
        <path d="M2 15l6-4v8zM14 3l-4 6h8z" fill={G} /><path d="M6 15h7M14 8v5" stroke={G} strokeWidth="2" />
      </PS>
    </Slot>
    <Slot className="w-[38px]">
      <PS>
        <path d="M27 3l4 4-13 15-7-3z" fill={G} /><circle cx="7" cy="26" r="4" fill={T} />
        <path d="M10 29c6 3 14 2 12-3-2-4-8-3-7 0" fill="none" stroke={G} strokeWidth="1.5" />
      </PS>
    </Slot>
    <Sep className="w-[20px]" h="h-[30px]" />
    <Fr blue className="ml-[3px]">
      <svg width="28" height="28" viewBox="0 0 28 28"><rect x="2" y="3" width="24" height="22" fill="none" stroke={G} strokeWidth="2" /><path d="M10 3v22M18 3v22M2 10.5h24M2 18h24" stroke={G} strokeWidth="2" /></svg>
    </Fr>
    <Slot className="ml-[2px] w-[37px]">
      <Box30><path d="M5 9h22M5 23h22" stroke={G} strokeWidth="2" strokeDasharray="2 2" /></Box30>
    </Slot>
    <Slot className="w-[38px]"><Box30><ellipse cx="16" cy="16" rx="6" ry="5.5" fill={T} /></Box30></Slot>
    <Fr dark className="!w-[37px]"><svg width="18" height="14"><ellipse cx="9" cy="7" rx="8" ry="6" fill="#5a5a5a" /></svg></Fr>
    <Slot className="w-[38px]"><Box30><path d="M9 9h14M9 23h14M6 12v8M26 12v8M10 16h12" stroke={T} strokeWidth="2" strokeDasharray="3 2" /></Box30></Slot>
    <Slot className="w-[39px]"><Box30><path d="M6 23l7-9 5 9z" fill={T} /><circle cx="21" cy="13" r="4" fill={T} /></Box30></Slot>
    <Slot className="w-[38px]"><Box30><text x="16" y="23" fontSize="20" textAnchor="middle" fill={T} fontFamily="Liberation Serif">T</text></Box30></Slot>
    <Sep className="w-[20px]" h="h-[30px]" />
    <Slot className="ml-[2px] w-[38px]">
      <PS>
        <path d="M16 2l12 7v14l-12 7-12-7V9z" fill="none" stroke={G} strokeWidth="2" />
        <path d="M16 16V9M16 16l-6 4M16 16l6 4" stroke={G} strokeWidth="1.5" />
      </PS>
    </Slot>
    <Fr blue className="ml-[1px]">
      <PS>
        <path d="M16 2l13 7-13 7L3 9z" fill="#7fdde6" stroke={G} strokeWidth="1.2" />
        <path d="M3 9l13 7v15L3 24z" fill="#43adbb" stroke="#333" strokeWidth="1" />
        <path d="M29 9l-13 7v15l13-7z" fill="#5ac5d1" stroke="#333" strokeWidth="1" />
      </PS>
    </Fr>
    <Slot className="ml-[1px] w-[38px]">
      <PS>
        <circle cx="16" cy="16" r="13" fill={G} />
        <path d="M16 3a13 13 0 0 1 0 26V3" fill="#3a3a3a" />
        <path d="M16 7h4v4h-4zM20 11h4v4h-4zM16 15h4v4h-4zM20 19h4v4h-4zM16 23h4v4h-4z" fill={G} />
      </PS>
    </Slot>
    <Slot className="w-[38px]">
      <PS>
        <path d="M16 2l13 7v14l-13 7-13-7V9z" fill="none" stroke={G} strokeWidth="2" />
        <path d="M9 12l6 3v11l-6-3zM23 12l-6 3v11l6-3z" fill={T} />
        <path d="M16 6l7 4-7 3-7-3z" fill={T} />
      </PS>
    </Slot>
    <Fr blue className="ml-[1px]">
      <PS>
        <circle cx="16" cy="16" r="13" fill="#2e2e2e" />
        <clipPath id="chk"><circle cx="16" cy="16" r="11.5" /></clipPath>
        <g clipPath="url(#chk)" fill={G}>
          {[0, 1, 2, 3, 4, 5, 6, 7].flatMap((r) =>
            [0, 1, 2, 3, 4, 5, 6, 7].filter((c) => (r + c) % 2 === 0).map((c) => <rect key={`${r}-${c}`} x={c * 4} y={r * 4} width="4" height="4" />)
          )}
        </g>
      </PS>
    </Fr>
    <Slot className="ml-[1px] w-[38px]">
      <PS>
        <path d="M16 8a7 7 0 0 1 4 13v3h-8v-3a7 7 0 0 1 4-13z" fill={G} /><path d="M13 25h6l-3 4z" fill={G} />
        <path d="M16 1v4M5 15H1M31 15h-4M7 6l3 3M25 6l-3 3" stroke={G} strokeWidth="2" />
      </PS>
    </Slot>
    <Slot className="w-[40px]">
      <PS>
        <ellipse cx="20" cy="15" rx="9" ry="10" fill={T} />
        <path d="M2 23l9-4 6 8-10 2z" fill="none" stroke={G} strokeWidth="2" strokeDasharray="2 2" />
      </PS>
    </Slot>
    <Sep className="w-[16px]" h="h-[30px]" />
    <Slot className="w-[42px]">
      <PS>
        <ellipse cx="16" cy="12" rx="10" ry="11" fill={G} />
        <path d="M4 24l12-5 13 5-12 5z" fill={T} />
        <path d="M9 13h14" stroke="#555" strokeDasharray="2 2" />
      </PS>
    </Slot>
    <Slot className="w-[37px]">
      <PS>
        <circle cx="13" cy="20" r="9" fill="#5a5a5a" /><circle cx="16" cy="16" r="9" fill="#6f6f6f" />
        <circle cx="21" cy="10" r="9" fill={G} />
      </PS>
    </Slot>
    <Slot className="w-[40px]">
      <PS>
        <path d="M15 4a12 12 0 0 0 0 24" fill="none" stroke={T} strokeWidth="5" />
        <path d="M18 3h4v4h-4zM24 7h4v4h-4zM26 13h4v4h-4zM24 20h4v4h-4zM18 25h4v4h-4z" fill={G} />
      </PS>
    </Slot>
    <Fr dark>
      <svg width="30" height="30"><rect x="3" y="3" width="14" height="14" fill="#4e5a60" /><rect x="14" y="12" width="14" height="15" fill="#49666d" /></svg>
    </Fr>
    <Sep className="w-[22px]" h="h-[30px]" />
    <Slot className="w-[36px]">
      <PS>
        <rect x="3" y="3" width="18" height="19" fill="none" stroke={T} strokeWidth="2.5" strokeDasharray="5 3" />
        <Arrow x={15} y={11} k={0.8} />
      </PS>
    </Slot>
    <Sep className="w-[26px]" h="h-[30px]" />
    <Slot className="w-[36px] !h-[30px] rounded-[3px] bg-[#3c3c3c]">
      <PS><path d="M11 6h14v14" fill="none" stroke={G} strokeWidth="3" /><path d="M6 11h15v15H6z" fill="none" stroke={G} strokeWidth="4" /></PS>
    </Slot>
    <Slot className="ml-[2px] w-[36px] !h-[30px] rounded-[3px] bg-[#3c3c3c]">
      <PS><path d="M11 5h17v17H11z" fill="none" stroke={G} strokeWidth="2" /><rect x="16" y="10" width="7" height="7" fill={G} /><path d="M5 11v16h16" fill="none" stroke={G} strokeWidth="3" /></PS>
    </Slot>
    <Slot className="ml-[2px] w-[34px] !h-[30px] rounded-[3px] bg-[#3c3c3c]">
      <PS><rect x="4" y="4" width="24" height="24" fill="none" stroke={G} strokeWidth="2" /><circle cx="13" cy="12" r="3.5" fill={G} /><path d="M14 14l9 11" stroke={G} strokeWidth="3" /></PS>
    </Slot>
    <Sep className="w-[24px]" h="h-[30px]" />
    <Slot className="w-[44px]">
      <svg width="28" height="30" viewBox="0 0 28 28">
        <circle cx="14" cy="14" r="12" fill={G} />
        <path d="M14 2l-2 8 6 3 9-2M26 14l-8 1-1 6 3 5M14 26l2-8-6-3-8 2M2 14l8-1 1-7-4-3" fill="none" stroke="#3c3c3c" strokeWidth="2" />
      </svg>
    </Slot>
    <Field className="h-[30px] w-[73px] text-[23px]">0.00</Field>
    <Slot className="w-[50px]">
      <svg width="24" height="32" viewBox="0 0 24 32">
        <circle cx="12" cy="16" r="11" fill={G} />
        <rect x="11" y="1" width="12" height="30" fill={G} />
        <path d="M12 3a13 13 0 0 1 0 26" fill="#3c3c3c" />
      </svg>
    </Slot>
    <Field className="h-[30px] w-[73px] text-[23px]">1.00</Field>
    <Fr blue className="ml-[7px]">
      <svg width="30" height="30">
        <circle cx="15" cy="15" r="13" fill={T} stroke="#2e2e2e" strokeWidth="2" />
        <text x="15" y="20" fontSize="13" fontWeight="600" textAnchor="middle" fill="#222" fontFamily="Open Sans">ON</text>
      </svg>
    </Fr>
    <Combo className="ml-[6px] h-[30px] w-[286px]" text="text-[23px]">sRGB gamma</Combo>
  </div>
);

const STATS: [string, string, string, string][] = [
  ["Verts:", "42", "42", "0"],
  ["Edges:", "80", "80", "0"],
  ["Faces:", "40", "40", "0"],
  ["Tris:", "80", "80", "0"],
  ["UVs:", "90", "90", "0"],
];

const WIRE = "#40f39d";
const deg = (d: number) => (d * Math.PI) / 180;

const topPts = Array.from({ length: 20 }).map((_, k) => {
  const a = deg(k * 18 + 9.5);
  return [1707 + 162 * Math.sin(a), 617 + 48 * Math.cos(a)];
});

const frontTop = [
  [1545, 627], [1561, 638], [1591, 651], [1633, 660], [1685, 665],
  [1739, 665], [1789, 659], [1829, 649], [1857, 635], [1869, 623],
];
const frontBottom = [
  [1566, 1502], [1578, 1523], [1604, 1544], [1643, 1558], [1687, 1566],
  [1734, 1565], [1779, 1556], [1815, 1540], [1840, 1520], [1852, 1497],
];

const Cylinder = () => {
  const top = topPts.map((p) => p.join(",")).join(" ");
  const body = [...frontTop, ...[...frontBottom].reverse()].map((p) => p.join(",")).join(" ");
  return (
    <svg className="absolute left-0 top-0 h-full w-full" viewBox="100 422 3213 1314" preserveAspectRatio="xMinYMin slice">
      <defs>
        <linearGradient id="cylShade" gradientUnits="userSpaceOnUse" x1="1548" y1="0" x2="1868" y2="0">
          <stop offset="0" stopColor="#303030" />
          <stop offset="0.06" stopColor="#414141" />
          <stop offset="0.15" stopColor="#525252" />
          <stop offset="0.28" stopColor="#5f5f5f" />
          <stop offset="0.5" stopColor="#686868" />
          <stop offset="0.72" stopColor="#5f5f5f" />
          <stop offset="0.85" stopColor="#525252" />
          <stop offset="0.94" stopColor="#414141" />
          <stop offset="1" stopColor="#303030" />
        </linearGradient>
      </defs>
      <polygon points={body} fill="url(#cylShade)" />
      <g stroke={WIRE} strokeWidth="2" fill="none" shapeRendering="crispEdges">
        <polyline points={frontBottom.map((p) => p.join(",")).join(" ")} />
        {frontTop.map((p, i) => (
          <line key={i} x1={p[0]} y1={p[1]} x2={frontBottom[i][0]} y2={frontBottom[i][1]} />
        ))}
        <polygon points={top} />
        {topPts
          .filter((_, i) => i % 2 === 0)
          .map((p, i) => (
            <line key={i} x1={p[0]} y1={p[1]} x2={1707} y2={616} />
          ))}
      </g>
      <g fontFamily="Liberation Sans" fontSize="15">
        <path d="M150 1660v24" stroke="#18d018" strokeWidth="2" />
        <path d="M150 1684l-10-11" stroke="#e01818" strokeWidth="2" />
        <path d="M150 1684l25-6" stroke="#1818e0" strokeWidth="2" />
        <text x="150" y="1654" textAnchor="middle" fill="#18d018">Y</text>
        <text x="135" y="1671" textAnchor="middle" fill="#e01818">X</text>
        <text x="179" y="1675" textAnchor="middle" fill="#1818e0">Z</text>
      </g>
    </svg>
  );
};

const Viewport = () => (
  <div className="relative min-h-0 flex-1 overflow-hidden bg-[#5e5e5e]">
    <Cylinder />
    <div className="absolute left-[29px] top-0 font-['DejaVu_Sans',sans-serif] text-[17px] text-[#f2f2f2] [text-shadow:0.5px_0_0_#f2f2f2]">
      {STATS.map(([a, b, c, d]) => (
        <div key={a} className="flex h-[40px] items-center">
          <span className="w-[205px]">{a}</span>
          <span className="w-[130px]">{b}</span>
          <span className="w-[144px]">{c}</span>
          <span>{d}</span>
        </div>
      ))}
    </div>
    <span className="absolute left-[1570px] top-[1280px] font-['Liberation_Sans',sans-serif] text-[18px] font-bold text-[#e8e8e8]">persp</span>
  </div>
);

const Panel = () => (
  <div className="ml-[3px] mr-[2px] mt-[10px] flex min-h-0 flex-1 flex-col border border-[#8c8c8c] bg-[#434343]">
    <div className="flex h-[38px] shrink-0 items-start pl-[16px] font-['Open_Sans',sans-serif] text-[23px] text-[#b8b8b8]">
      {PANEL_MENU.map(([m, w]) => (
        <span key={m} className={`shrink-0 tracking-[0.4px] ${w}`}>
          {m}
        </span>
      ))}
    </div>
    <PanelBar />
    <Viewport />
  </div>
);

const SIDE_TABS = [
  ["Channel Box / Layer Editor", "h-[326px]"],
  ["Modeling Toolkit", "h-[227px]"],
  ["Attribute Editor", "h-[208px]"],
  ["Light Editor", "h-[167px]"],
  ["Property Editor", "h-[199px]"],
];

const SideTabs = () => (
  <div className="flex w-[44px] shrink-0 flex-col gap-[5px] bg-[#3c3c3c] pl-[11px] pt-[4px]">
    {SIDE_TABS.map(([t, h]) => (
      <div key={t} className={`flex w-[33px] shrink-0 items-center justify-center rounded-l-[3px] border border-r-0 border-[#2e2e2e] bg-[#444444] ${h}`}>
        <span className="rotate-180 whitespace-nowrap text-[23px] text-[#9a9a9a] [writing-mode:vertical-rl]">{t}</span>
      </div>
    ))}
  </div>
);

/* ---------- time slider and bottom rows ---------- */

const FRAMES = Array.from({ length: 23 }).map((_, i) => (i + 1) * 5);

const Tick = ({ f, className = "" }: { f: number; className?: string }) => (
  <div className={`relative h-full shrink-0 ${className}`}>
    <div className="absolute bottom-0 left-0 h-[30px] w-[2px] bg-[#8e8e8e]" />
    <span className="absolute left-[4px] top-0 text-[22px] leading-[22px] text-[#8c8c8c]">{f}</span>
  </div>
);

const Timeline = () => (
  <div className="relative flex h-[56px] w-[2744px] shrink-0 bg-[#2b2b2b] pl-[106px]">
    <div className="absolute left-[15px] top-0 flex h-full w-[19px] items-end justify-center bg-[#555555] pb-[4px] text-[24px] text-white">1</div>
    {FRAMES.map((f) => (
      <Tick key={f} f={f} className="w-[113.08px]" />
    )).concat(<Tick key={120} f={120} className="w-[37px] overflow-hidden" />)}
  </div>
);

const Play = ({ children }: Kids) => (
  <div className="flex h-[44px] w-[46.4px] shrink-0 items-center justify-center">
    <svg width="38" height="44" viewBox="0 0 38 44" fill={G}>
      {children}
    </svg>
  </div>
);

const OR = "#e07a2c";

const TimeRow = () => (
  <div className="flex h-[70px] shrink-0 items-center bg-[#444444]">
    <Grip rows={7} className="ml-[4px] mr-[12px]" />
    <Timeline />
    <Field className="ml-[15px] h-[35px] w-[173px]">1</Field>
    <div className="ml-[15px] flex shrink-0">
      <Play><path d="M4 6h3v32H4zM21 6v32L9 22zM34 6v32L22 22z" /></Play>
      <Play><path d="M5 6h4v32H5zM30 6v32L13 22z" /></Play>
      <Play><rect x="7" y="8" width="5" height="28" fill={OR} /><path d="M32 8v28L16 22z" /></Play>
      <Play><path d="M29 2v40L5 22z" /></Play>
      <Play><path d="M9 2v40l24-20z" /></Play>
      <Play><path d="M6 8v28l16-14z" /><rect x="25" y="8" width="5" height="28" fill={OR} /></Play>
      <Play><path d="M8 6v32l17-16zM29 6h4v32h-4z" /></Play>
      <Play><path d="M4 6v32l12-16zM16 6v32l12-16zM31 6h3v32h-3z" /></Play>
    </div>
  </div>
);

const RangeRow = () => (
  <div className="flex h-[64px] shrink-0 items-center bg-[#444444]">
    <Grip rows={6} className="ml-[4px] mr-[14px]" />
    <Field className="h-[44px] w-[174px]">1</Field>
    <Field className="ml-[19px] h-[44px] w-[174px]">1</Field>
    <div className="ml-[15px] flex h-[46px] w-[1550px] shrink-0 items-center bg-[#3b3b3b] pl-[8px]">
      <div className="flex h-[36px] w-[938px] shrink-0 items-center rounded-[4px] bg-[#5f5f5f] pl-[8px] text-[23px] text-[#c2c2c2]">
        <div className="h-[24px] w-[26px] shrink-0 rounded-[8px] bg-[#8c8c8c]" />
        <span className="ml-[6px] mt-[2px]">1</span>
        <span className="ml-auto mt-[2px]">120</span>
        <div className="ml-[9px] mr-[6px] h-[24px] w-[25px] shrink-0 rounded-[8px] bg-[#8c8c8c]" />
      </div>
    </div>
    <Field className="ml-[14px] h-[44px] w-[175px]">120</Field>
    <Field className="ml-[19px] h-[44px] w-[172px]">200</Field>
    <Sep className="w-[26px]" />
    <Slot className="w-[54px] pb-[4px]"><Tri fill="#3a3a3a" stroke="#7c7c7c" w={16} h={16} /></Slot>
    <LineBox className="w-[200px]">No Character Set</LineBox>
    <Slot className="w-[59px] pb-[4px]"><Tri fill="#3a3a3a" stroke="#7c7c7c" w={16} h={16} /></Slot>
    <LineBox className="w-[200px]">No Anim Layer</LineBox>
    <Sep className="w-[44px]" />
    <Combo className="ml-[6px] h-[38px] w-[202px]">24 fps</Combo>
    <Slot className="ml-[8px] w-[64px]">
      <svg width="36" height="34" viewBox="0 0 36 34" fill="none" stroke={G} strokeWidth="4">
        <path d="M6 22V14a6 6 0 0 1 6-6h14" />
        <path d="M30 12v8a6 6 0 0 1-6 6H10" />
        <path d="M24 1l9 7-9 7z" fill={G} stroke="none" />
        <path d="M12 19l-9 7 9 7z" fill={G} stroke="none" />
      </svg>
    </Slot>
    <Sep className="w-[24px]" />
    <div className="ml-[10px] flex h-[46px] w-[46px] shrink-0 items-center justify-center rounded-[2px] bg-[#d0313d]">
      <svg width="38" height="38" viewBox="0 0 38 38" fill="none">
        <path d="M6 13a15 15 0 0 1 26 0M32 25a15 15 0 0 1-26 0" stroke="#cfcfcf" strokeWidth="3" />
        <rect x="10" y="15" width="18" height="8" stroke="#222" strokeWidth="2" />
        <path d="M19 6v26" stroke="#222" strokeWidth="2" />
      </svg>
    </div>
    <svg width="44" height="50" viewBox="0 0 44 50" className="ml-[12px] shrink-0">
      <circle cx="12" cy="11" r="6" fill="none" stroke={G} strokeWidth="4" strokeDasharray="3 1.5" />
      <circle cx="32" cy="13" r="4" fill={OR} />
      <path d="M30 18l-7 8 7 5-4 14M30 19l3 9 7 2M25 33l-7 3" fill="none" stroke={OR} strokeWidth="4" />
    </svg>
  </div>
);

const MelRow = () => (
  <div className="flex h-[62px] shrink-0 items-center bg-[#444444] text-[24px]">
    <Grip rows={6} className="ml-[4px]" />
    <span className="ml-[35px] w-[69px] shrink-0 text-[#e0e0e0]">MEL</span>
    <div className="h-[42px] w-[725px] shrink-0 rounded-[2px] border-t border-[#232323] bg-[#2b2b2b]" />
    <Grip rows={2} className="ml-[3px]" />
    <div className="ml-[4px] h-[48px] w-[2434px] shrink-0 bg-[#2b2b2b]" />
    <svg width="37" height="37" viewBox="0 0 37 37" className="ml-[12px] shrink-0">
      <rect width="37" height="8" fill={G} />
      <path d="M3 3h2v2H3zM7 3h2v2H7zM11 3h2v2h-2z" fill="#333" />
      <rect y="10" width="37" height="27" fill={G} />
      <text x="18.5" y="31" fontSize="22" textAnchor="middle" fill="#333" fontFamily="Liberation Sans">{"{;}"}</text>
    </svg>
  </div>
);

const StatusRow = () => (
  <div className="relative flex h-[46px] shrink-0 items-center rounded-b-[8px] border-b border-[#7a7a7a] bg-[#444444] text-[23px] text-[#b8b8b8]">
    <Grip rows={4} className="ml-[4px]" />
    <span className="ml-[33px] mt-[2px]">Select Tool: select an object</span>
    <svg width="28" height="26" viewBox="0 0 28 26" className="absolute bottom-[1px] right-[4px]">
      <path d="M26 0L0 26M27 8L9 26M27 16L17 26" stroke="#2c2c2c" strokeWidth="2" />
    </svg>
  </div>
);

/* ---------- dock ---------- */

const DI = ({ children }: Kids) => (
  <svg width="70" height="70" viewBox="0 0 70 70">
    {children}
  </svg>
);

const Chrome = () => (
  <DI>
    <path d="M35 35L8.2 19.5A31 31 0 0 1 61.8 19.5z" fill="#cf5745" />
    <path d="M35 35L61.8 19.5A31 31 0 0 1 35 66z" fill="#f2c94d" />
    <path d="M35 35L35 66A31 31 0 0 1 8.2 19.5z" fill="#4fa163" />
    <circle cx="35" cy="35" r="14" fill="#f4f4f4" />
    <circle cx="35" cy="35" r="11" fill="#5a8df0" />
  </DI>
);

const FolderIcon = ({ children }: Kids) => (
  <DI>
    {children}
    <path d="M5 22h60v41H5z" fill="#6aadd8" />
    <path d="M5 20h60v5H5z" fill="#4f8fba" />
  </DI>
);

const Adobe = ({ label, border, bg, text }: { label: string; border: string; bg: string; text: string }) => (
  <div className={`flex h-[66px] w-[66px] items-center justify-center border-[3px] font-['Open_Sans',sans-serif] text-[38px] leading-none ${border} ${bg} ${text}`}>{label}</div>
);

const MayaTile = ({ label, id }: { label: string; id: string }) => (
  <div className="flex h-[72px] w-[70px] flex-col items-center bg-[#e4f0f0] pt-[5px]">
    <svg width="48" height="46" viewBox="0 0 64 62">
      <defs>
        <linearGradient id={id} x1="0" y1="0" x2="0" y2="1">
          <stop offset="0" stopColor="#5fb0b6" />
          <stop offset="1" stopColor="#a9d4d7" />
        </linearGradient>
      </defs>
      <path d="M0 3l16-2 16 42 17-42h15v60l-10-2V28L40 58H26L11 22v38l-11 2z" fill={`url(#${id})`} />
    </svg>
    <span className="ml-[22px] font-['Open_Sans',sans-serif] text-[12px] leading-[16px] text-[#4aa5aa]">{label}</span>
  </div>
);

const Cell = ({ children, dot = false, className = "w-[75.2px]" }: Kids & { dot?: boolean }) => (
  <div className={`flex shrink-0 flex-col items-center ${className}`}>
    <div className="flex h-[72px] items-center justify-center">{children}</div>
    <div className={`mt-[3px] h-[6px] w-[6px] rounded-full ${dot ? "bg-[#8f939c]" : ""}`} />
  </div>
);

const DockSep = ({ className }: Kids) => (
  <div className={`flex shrink-0 justify-center ${className}`}>
    <div className="mt-[6px] h-[66px] w-[1px] bg-[#4a4f5c]" />
  </div>
);

const Dock = () => (
  <div className="flex min-h-0 flex-1 bg-[#10141f]">
    <div className="flex w-[58px] shrink-0 flex-col">
      <div className="h-[22px] bg-[#2a2a2a]" />
    </div>
    <div className="flex min-w-0 flex-1 flex-col">
      <div className="h-[4px] shrink-0 bg-[#1e1e1e]" />
      <div className="flex min-h-0 flex-1 gap-[5px]">
        <div className="flex w-[82px] shrink-0 justify-center rounded-t-[10px] border border-b-0 border-[#3a3f4c] bg-[#1a1f2d] pt-[7px]">
          <div className="relative">
            <Cell><Chrome /></Cell>
            <div className="absolute right-[-3px] top-[-4px] flex h-[34px] w-[24px] items-center justify-center rounded-full bg-[#d8d8d8]">
              <div className="h-[20px] w-[12px] rounded-[2px] border-2 border-[#333] bg-[#777]" />
            </div>
          </div>
        </div>
        <div className="flex w-[3155px] shrink-0 rounded-t-[10px] border border-b-0 border-[#3a3f4c] bg-[#1a1f2d] pl-[1px] pt-[7px]">
          <Cell dot>
            <DI>
              <rect x="4" y="4" width="62" height="62" rx="3" fill="#3b8df0" />
              <path d="M35 4h28a3 3 0 0 1 3 3v56a3 3 0 0 1-3 3H39c-1-9-2-19-1-27h-7c1-12 3-25 4-35z" fill="#e9eef3" />
              <path d="M21 18v9M48 18v9" stroke="#222" strokeWidth="3" />
              <path d="M17 47c10 9 26 9 36 0" fill="none" stroke="#222" strokeWidth="2.5" />
            </DI>
          </Cell>
          <Cell>
            <DI>
              <circle cx="35" cy="35" r="31" fill="#f0f0f0" />
              <circle cx="35" cy="35" r="28" fill="#15152a" />
              <circle cx="35" cy="35" r="28" fill="none" stroke="#90306e" strokeWidth="5" />
              <path d="M35 12l5 18 18 5-18 5-5 18-5-18-18-5 18-5z" fill="#b7f1ff" />
              <circle cx="35" cy="35" r="7" fill="#fff" />
            </DI>
          </Cell>
          <Cell>
            <DI>
              <circle cx="35" cy="35" r="31" fill="#a3a5a8" />
              <path d="M47 14c2 12-2 22-9 29l-7 3-8-8 3-7c7-8 13-13 21-17z" fill="#33363a" />
              <path d="M25 29l-9 3-3 8 8-3zM38 44l-3 9-8 3 3-8z" fill="#33363a" />
            </DI>
          </Cell>
          <Cell dot><Chrome /></Cell>
          <Cell>
            <DI>
              <circle cx="35" cy="35" r="31" fill="#f0f4f8" />
              <circle cx="35" cy="35" r="27" fill="#2f83d8" />
              <circle cx="35" cy="35" r="21" fill="none" stroke="#d8ecff" strokeWidth="5" strokeDasharray="1 3" />
              <path d="M50 17L31 32l8 7z" fill="#e24a3b" />
              <path d="M20 53l19-14-8-7z" fill="#f4f4f4" />
            </DI>
          </Cell>
          <Cell>
            <DI>
              <path d="M8 10l46-6v54L8 66z" fill="#a9824b" />
              <path d="M54 8l5 2v46l-5 2z" fill="#c9c2b0" />
              <path d="M59 26l4-1v14l-4 1zM59 40l4-1v14l-4 1z" fill="#5bb26e" />
              <circle cx="28" cy="28" r="9" fill="#8f6d3d" /><circle cx="40" cy="28" r="9" fill="#8f6d3d" />
              <path d="M18 50c0-9 22-9 22 0zM32 50c0-9 18-9 18 0z" fill="#8f6d3d" />
            </DI>
          </Cell>
          <Cell>
            <DI>
              <path d="M8 12l52-6 4 50-50 8z" fill="#f4f4f4" />
              <path d="M8 12l52-6 1 12-52 5z" fill="#cf4d4d" />
              <path d="M12 60l52-7v5l-50 8z" fill="#555" />
              <text x="35" y="20" fontSize="13" textAnchor="middle" fill="#fff" fontFamily="Liberation Sans">MAY</text>
              <text x="37" y="50" fontSize="30" textAnchor="middle" fill="#222" fontFamily="Liberation Sans">18</text>
            </DI>
          </Cell>
          <Cell>
            <DI>
              <path d="M8 10l54-8v58L12 68z" fill="#f5f3e6" />
              <path d="M8 10l54-8v11L9 20z" fill="#f4d35e" />
              <path d="M10 28l52-6M10 36l52-6M11 44l51-6M11 52l51-6M12 60l50-6" stroke="#d8d6c8" strokeWidth="1.5" />
            </DI>
          </Cell>
          <Cell>
            <DI>
              <circle cx="35" cy="35" r="31" fill="#f4f4f4" />
              <g opacity="0.9">
                <ellipse cx="35" cy="18" rx="7" ry="12" fill="#f2a23a" />
                <ellipse cx="35" cy="52" rx="7" ry="12" fill="#6ba5dc" />
                <ellipse cx="18" cy="35" rx="12" ry="7" fill="#9e6db0" />
                <ellipse cx="52" cy="35" rx="12" ry="7" fill="#a8c54a" />
                <ellipse cx="23" cy="23" rx="7" ry="12" transform="rotate(-45 23 23)" fill="#d9594f" />
                <ellipse cx="47" cy="23" rx="7" ry="12" transform="rotate(45 47 23)" fill="#ebc43c" />
                <ellipse cx="23" cy="47" rx="7" ry="12" transform="rotate(45 23 47)" fill="#7b7fc4" />
                <ellipse cx="47" cy="47" rx="7" ry="12" transform="rotate(-45 47 47)" fill="#5db889" />
              </g>
            </DI>
          </Cell>
          <Cell dot>
            <DI>
              <path d="M34 3c17 0 29 12 29 27 0 10-5 17-13 21H22l-7 9 2-13C9 42 4 36 4 30 4 15 17 3 34 3z" fill="#4fa8f7" />
              <ellipse cx="45" cy="48" rx="18" ry="15" fill="#f4f4f4" />
              <path d="M54 58l6 8-12-5z" fill="#f4f4f4" />
              <circle cx="37" cy="48" r="2.8" fill="#2f6fd2" /><circle cx="45" cy="48" r="2.8" fill="#2f6fd2" /><circle cx="53" cy="48" r="2.8" fill="#2f6fd2" />
            </DI>
          </Cell>
          <Cell>
            <DI>
              <rect x="7" y="4" width="50" height="56" rx="8" fill="#5fd06a" />
              <rect x="12" y="18" width="26" height="25" rx="5" fill="#f2f2f2" />
              <path d="M40 26l11-8v26l-11-8z" fill="#f2f2f2" />
              <ellipse cx="49" cy="50" rx="15" ry="18" fill="#f4f4f4" />
              <path d="M44 41c-2 7 2 15 9 18l3-4-4-3-2 1c-2-2-3-5-3-8l2-1-2-4z" fill="#47b658" />
            </DI>
          </Cell>
          <Cell>
            <DI>
              <defs>
                <linearGradient id="itunesRing" x1="0" y1="0" x2="1" y2="1">
                  <stop offset="0" stopColor="#f2566c" />
                  <stop offset="0.5" stopColor="#9d59e0" />
                  <stop offset="1" stopColor="#3fb7f0" />
                </linearGradient>
              </defs>
              <circle cx="35" cy="35" r="29" fill="#f6f6f6" stroke="url(#itunesRing)" strokeWidth="5" />
              <path d="M28 46V22l20-5v24" fill="none" stroke="url(#itunesRing)" strokeWidth="5" />
              <ellipse cx="22" cy="46" rx="7" ry="6" fill="#8b5fe0" /><ellipse cx="42" cy="41" rx="7" ry="6" fill="#5d7fe8" />
            </DI>
          </Cell>
          <Cell>
            <DI>
              <circle cx="38" cy="36" r="30" fill="#d6583a" />
              <path d="M38 6a30 30 0 0 1 30 30H38z" fill="#f08e66" />
              <rect x="3" y="20" width="30" height="32" rx="3" fill="#b33f22" />
              <text x="18" y="46" fontSize="26" fontWeight="700" textAnchor="middle" fill="#fff" fontFamily="Liberation Sans">P</text>
            </DI>
          </Cell>
          <Cell>
            <DI>
              <rect x="17" y="7" width="50" height="56" rx="3" fill="#2a6cc4" />
              <rect x="17" y="7" width="50" height="18" rx="3" fill="#4a9bea" />
              <rect x="17" y="25" width="50" height="18" fill="#3684da" />
              <rect x="2" y="20" width="30" height="30" rx="3" fill="#1f55ac" />
              <text x="17" y="43" fontSize="22" fontWeight="700" textAnchor="middle" fill="#fff" fontFamily="Liberation Sans">W</text>
            </DI>
          </Cell>
          <Cell>
            <DI>
              <rect x="17" y="6" width="46" height="58" rx="3" fill="#2a7bd5" />
              <rect x="40" y="12" width="23" height="24" fill="#5ec7f5" />
              <path d="M17 40l46-10v34H17z" fill="#49a8e8" />
              <rect x="2" y="20" width="30" height="30" rx="3" fill="#1f66c4" />
              <text x="17" y="43" fontSize="22" fontWeight="700" textAnchor="middle" fill="#fff" fontFamily="Liberation Sans">O</text>
            </DI>
          </Cell>
          <Cell><Adobe label="Ae" border="border-[#cfa3f2]" bg="bg-[#220a4a]" text="text-[#cfa3f2]" /></Cell>
          <Cell><Adobe label="An" border="border-[#f04a26]" bg="bg-[#2a0500]" text="text-[#f04a26]" /></Cell>
          <Cell><Adobe label="Ps" border="border-[#4fcaf0]" bg="bg-[#0a2833]" text="text-[#4fcaf0]" /></Cell>
          <Cell><Adobe label="Pr" border="border-[#e49bf5]" bg="bg-[#2e0e42]" text="text-[#e49bf5]" /></Cell>
          <Cell><Adobe label="Ai" border="border-[#f7942d]" bg="bg-[#3a1c00]" text="text-[#f7942d]" /></Cell>
          <Cell><Adobe label="Ch" border="border-[#d4a7f5]" bg="bg-[#2a0f4c]" text="text-[#d4a7f5]" /></Cell>
          <Cell><Adobe label="Dw" border="border-[#8ef23e]" bg="bg-[#0f2300]" text="text-[#8ef23e]" /></Cell>
          <Cell>
            <DI>
              <path d="M35 0l-20 70h40z" fill="#f3e3c0" />
              <path d="M35 0l-7 24h14z" fill="#7d7377" />
              <path d="M42 24l13 46H42z" fill="#2e3a48" />
              <path d="M28 50l-7 20h16l-2-20z" fill="#cf5140" />
            </DI>
          </Cell>
          <Cell>
            <DI>
              <rect x="0" y="0" width="70" height="70" rx="8" fill="#000" />
              <path d="M0 8a8 8 0 0 1 8-8h54a8 8 0 0 1 8 8v33H0z" fill="#3c3c3c" />
              <text x="35" y="46" fontSize="40" textAnchor="middle" fill="#fff" fontFamily="Liberation Serif">FI</text>
              <rect x="10" y="55" width="50" height="2" fill="#8a1a1a" />
            </DI>
          </Cell>
          <Cell>
            <DI>
              <circle cx="35" cy="35" r="31" fill="#dfe7f0" />
              <circle cx="35" cy="35" r="28" fill="#3a8cf5" />
              <path d="M36 15L22 46M32 15l15 31M14 40h42" stroke="#fff" strokeWidth="4" fill="none" />
            </DI>
          </Cell>
          <Cell dot><MayaTile label="MAYA" id="mayaTile" /></Cell>
          <Cell><MayaTile label="MUD" id="mudTile" /></Cell>
          <Cell>
            <div className="flex h-[64px] w-[64px] items-center justify-center rounded-full bg-[#1f1f1f] text-white ring-2 ring-[#e0e0e0]">
              <SiUnrealengine size={60} />
            </div>
          </Cell>
          <Cell><FaUnity size={60} color="#f2f2f2" /></Cell>
          <Cell>
            <DI>
              <circle cx="35" cy="33" r="31" fill="#52575e" />
              <circle cx="35" cy="33" r="22" fill="#1f8cec" />
              <path d="M35 25a9 9 0 1 0 6 16l12 16 7-2-14-20a9 9 0 0 0-11-10z" fill="#565b62" />
            </DI>
          </Cell>
          <Cell>
            <DI>
              <rect x="4" y="4" width="62" height="62" fill="#a8bac0" />
              <circle cx="35" cy="35" r="27" fill="#343434" />
              <circle cx="35" cy="35" r="26" fill="none" stroke="#8f8f8f" strokeWidth="4" strokeDasharray="3 3" />
              <circle cx="35" cy="35" r="17" fill="none" stroke="#9c9c9c" strokeWidth="4" />
              <path d="M35 18v17l-15 9M35 35l15 9" stroke="#9c9c9c" strokeWidth="5" />
            </DI>
          </Cell>
          <Cell>
            <DI>
              <circle cx="35" cy="35" r="31" fill="#6f4196" stroke="#e6e6e6" strokeWidth="3" />
              <path d="M21 12l8 5h12l8-5 2 12c2 8-2 15-9 17v10l7 6-6 8V52h-2v13h-6V52h-2v13l-5-6 1-7c-4 1-7 0-9-4 3 1 6 2 8 0v-7c-7-2-11-9-9-17z" fill="#f0f0f0" />
            </DI>
          </Cell>
          <Cell>
            <div className="flex h-[64px] w-[64px] items-center justify-center rounded-full border-[3px] border-[#e6e6e6] bg-[#5a6fbf] text-white">
              <FaDiscord size={38} />
            </div>
          </Cell>
          <DockSep className="w-[36px]" />
          <Cell>
            <DI>
              <rect x="12" y="3" width="56" height="40" fill="#a9895a" />
              <path d="M0 24L50 12l6 46L6 66z" fill="#f2f2f2" />
              <path d="M4 27l42-10 3 26-42 7z" fill="#78b0e8" />
              <path d="M6 50l43-7 2 12-43 8z" fill="#6a7a86" />
              <ellipse cx="56" cy="50" rx="12" ry="16" fill="#8a7e6e" />
              <ellipse cx="56" cy="50" rx="7" ry="10" fill="#c4c8cc" />
            </DI>
          </Cell>
          <Cell>
            <div className="flex h-[72px] w-[62px] flex-col items-center bg-black pt-[6px] font-['Liberation_Sans',sans-serif] text-[#efefef] [clip-path:polygon(0_0,100%_0,100%_88%,50%_100%,0_88%)]">
              <span className="scale-y-125 text-[25px] font-bold leading-[30px]">EPIC</span>
              <span className="text-[12px] font-bold leading-[20px]">GAMES</span>
            </div>
          </Cell>
          <Cell>
            <DI>
              <ellipse cx="35" cy="25" rx="20" ry="24" fill="#3a3a3a" stroke="#a8a8a8" strokeWidth="3" />
              <path d="M35 3v44M17 16l36 18M53 16L17 34" stroke="#b4b4b4" strokeWidth="2.5" />
              <circle cx="35" cy="25" r="6" fill="#d0d0d0" />
              <ellipse cx="35" cy="58" rx="21" ry="11" fill="#505050" stroke="#9a9a9a" strokeWidth="3" />
            </DI>
          </Cell>
          <DockSep className="w-[34px]" />
          <Cell>
            <FolderIcon>
              <path d="M12 4h20l2 6h-22z" fill="#e05a2c" />
              <path d="M8 10h42l4 8H8z" fill="#c59bf0" />
              <rect x="26" y="14" width="34" height="8" fill="#3a1c45" />
            </FolderIcon>
          </Cell>
          <Cell>
            <DI>
              <path d="M13 3h28l16 20v45H13z" fill="#f4f4f4" />
              <path d="M41 3l16 20H41z" fill="#c4c4c4" />
              <rect x="23" y="38" width="24" height="18" fill="#8a8f94" />
              <rect x="28" y="41" width="14" height="8" fill="#3a3f44" />
            </DI>
          </Cell>
          <Cell>
            <DI>
              <rect x="2" y="1" width="66" height="66" fill="#d42a1e" />
              <path d="M16 44c-7-4-6-15 3-15 3-10 18-12 24-2 10-2 15 10 8 17-5 4-14 3-20-2l-8-6" fill="none" stroke="#fff" strokeWidth="3.5" />
            </DI>
          </Cell>
          <Cell>
            <FolderIcon>
              <rect x="12" y="2" width="46" height="24" fill="#f2f2f2" />
              <path d="M34 5v18M40 8v15" stroke="#444" strokeWidth="2.5" />
            </FolderIcon>
          </Cell>
          <Cell>
            <DI>
              <path d="M12 16h46l-6 52H18z" fill="#53585c" />
              <ellipse cx="35" cy="16" rx="23" ry="7" fill="#70767a" />
              <path d="M18 16l6-12 6 10 6-12 6 11 7-8 3 11z" fill="#c8ccd0" />
              <path d="M24 24l4 40M35 24v40M46 24l-4 40" stroke="#6a7074" strokeWidth="1.5" />
            </DI>
          </Cell>
        </div>
      </div>
    </div>
    <div className="w-[60px] shrink-0" />
  </div>
);

const App = () => (
  <div className="flex h-[2100px] w-[3360px] flex-col overflow-hidden bg-[#10141f] font-['Open_Sans',sans-serif]">
    <MenuBar />
    <div className="flex h-[1957px] shrink-0 flex-col bg-[#383838]">
      <TitleBar />
      <MainMenu />
      <ToolRow />
      <div className="flex min-h-0 flex-1 pt-[4px]">
        <ToolBox />
        <div className="w-[10px] shrink-0 bg-[#3a3a3a]" />
        <div className="flex min-w-0 flex-1 flex-col bg-[#3a3a3a] pb-[11px]">
          <Shelf />
          <Panel />
        </div>
        <SideTabs />
      </div>
      <TimeRow />
      <div className="h-[4px] shrink-0" />
      <RangeRow />
      <div className="h-[4px] shrink-0" />
      <MelRow />
      <div className="h-[4px] shrink-0" />
      <StatusRow />
    </div>
    <Dock />
  </div>
);

export default App;
